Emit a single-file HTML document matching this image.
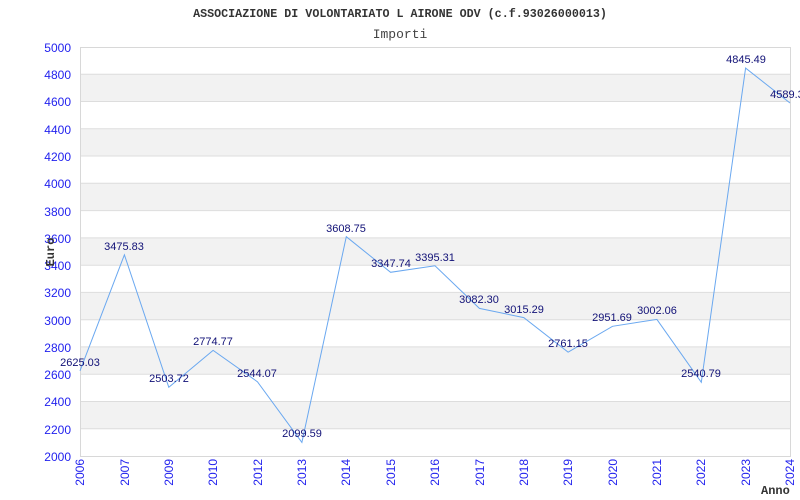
<!DOCTYPE html>
<html><head><meta charset="utf-8"><style>body{margin:0;background:#fff}svg{display:block}</style></head>
<body>
<svg width="800" height="500" xmlns="http://www.w3.org/2000/svg">
<text x="400" y="17" text-anchor="middle" font-family="Liberation Mono, monospace" font-weight="bold" font-size="11.7" fill="#333">ASSOCIAZIONE DI VOLONTARIATO L AIRONE ODV (c.f.93026000013)</text>
<text x="400" y="38" text-anchor="middle" font-family="Liberation Mono, monospace" font-size="13" fill="#444">Importi</text>
<g fill="#f2f2f2">
<rect x="80" y="74.3" width="710" height="27.3"/>
<rect x="80" y="128.8" width="710" height="27.3"/>
<rect x="80" y="183.3" width="710" height="27.3"/>
<rect x="80" y="237.9" width="710" height="27.3"/>
<rect x="80" y="292.4" width="710" height="27.3"/>
<rect x="80" y="346.9" width="710" height="27.3"/>
<rect x="80" y="401.5" width="710" height="27.3"/>
</g>
<g stroke="#ddd" stroke-width="1">
<line x1="80" x2="790" y1="74.3" y2="74.3"/><line x1="80" x2="790" y1="101.5" y2="101.5"/>
<line x1="80" x2="790" y1="128.8" y2="128.8"/><line x1="80" x2="790" y1="156" y2="156"/>
<line x1="80" x2="790" y1="183.3" y2="183.3"/><line x1="80" x2="790" y1="210.6" y2="210.6"/>
<line x1="80" x2="790" y1="237.9" y2="237.9"/><line x1="80" x2="790" y1="265.2" y2="265.2"/>
<line x1="80" x2="790" y1="292.4" y2="292.4"/><line x1="80" x2="790" y1="319.7" y2="319.7"/>
<line x1="80" x2="790" y1="346.9" y2="346.9"/><line x1="80" x2="790" y1="374.2" y2="374.2"/>
<line x1="80" x2="790" y1="401.5" y2="401.5"/><line x1="80" x2="790" y1="428.7" y2="428.7"/>
</g>
<rect x="80.5" y="47.5" width="710" height="409" fill="none" stroke="#d8d8d8"/>
<g font-family="Liberation Sans, sans-serif" font-size="12" fill="#2222ee" text-anchor="end">
<text x="71" y="52">5000</text><text x="71" y="79">4800</text><text x="71" y="106">4600</text>
<text x="71" y="134">4400</text><text x="71" y="161">4200</text><text x="71" y="188">4000</text>
<text x="71" y="216">3800</text><text x="71" y="243">3600</text><text x="71" y="270">3400</text>
<text x="71" y="297">3200</text><text x="71" y="325">3000</text><text x="71" y="352">2800</text>
<text x="71" y="379">2600</text><text x="71" y="406">2400</text><text x="71" y="434">2200</text>
<text x="71" y="461">2000</text>
</g>
<g font-family="Liberation Sans, sans-serif" font-size="12" fill="#2222ee" text-anchor="end">
<text transform="translate(84,459) rotate(-90)">2006</text>
<text transform="translate(129,459) rotate(-90)">2007</text>
<text transform="translate(173,459) rotate(-90)">2009</text>
<text transform="translate(217,459) rotate(-90)">2010</text>
<text transform="translate(262,459) rotate(-90)">2012</text>
<text transform="translate(306,459) rotate(-90)">2013</text>
<text transform="translate(350,459) rotate(-90)">2014</text>
<text transform="translate(395,459) rotate(-90)">2015</text>
<text transform="translate(439,459) rotate(-90)">2016</text>
<text transform="translate(484,459) rotate(-90)">2017</text>
<text transform="translate(528,459) rotate(-90)">2018</text>
<text transform="translate(572,459) rotate(-90)">2019</text>
<text transform="translate(617,459) rotate(-90)">2020</text>
<text transform="translate(661,459) rotate(-90)">2021</text>
<text transform="translate(705,459) rotate(-90)">2022</text>
<text transform="translate(750,459) rotate(-90)">2023</text>
<text transform="translate(794,459) rotate(-90)">2024</text>
</g>
<text transform="translate(54,252) rotate(-90)" text-anchor="middle" font-family="Liberation Mono, monospace" font-weight="bold" font-size="12" fill="#333">Euro</text>
<text x="761" y="494" font-family="Liberation Mono, monospace" font-weight="bold" font-size="12" fill="#333">Anno</text>
<polyline fill="none" stroke="#6aa8f0" stroke-width="1" points="80,370.8 124.4,254.8 168.8,387.3 213.1,350.4 257.5,381.8 301.9,442.4 346.3,236.7 390.6,272.3 435,265.8 479.4,308.4 523.8,317.6 568.1,352.2 612.5,326.3 656.9,319.4 701.3,382.3 745.6,68.1 790,103"/>
<g font-family="Liberation Sans, sans-serif" font-size="11" fill="#111177" text-anchor="middle">
<text x="80" y="366">2625.03</text><text x="124" y="250">3475.83</text><text x="169" y="382">2503.72</text>
<text x="213" y="345">2774.77</text><text x="257" y="377">2544.07</text><text x="302" y="437">2099.59</text>
<text x="346" y="232">3608.75</text><text x="391" y="267">3347.74</text><text x="435" y="261">3395.31</text>
<text x="479" y="303">3082.30</text><text x="524" y="313">3015.29</text><text x="568" y="347">2761.15</text>
<text x="612" y="321">2951.69</text><text x="657" y="314">3002.06</text><text x="701" y="377">2540.79</text>
<text x="746" y="63">4845.49</text><text x="790" y="98">4589.30</text>
</g>
</svg>
</body></html>
